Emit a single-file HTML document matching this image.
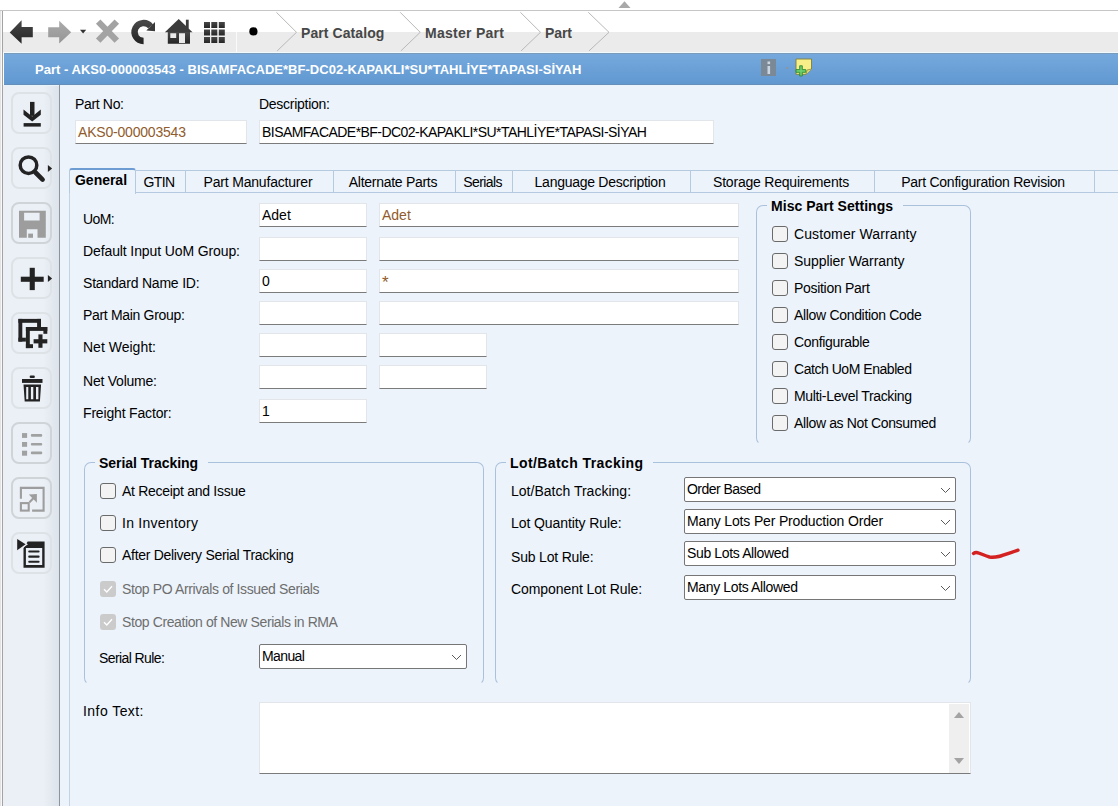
<!DOCTYPE html>
<html><head><meta charset="utf-8">
<style>
*{box-sizing:border-box;margin:0;padding:0}
html,body{width:1118px;height:806px;overflow:hidden;background:#fff;font-family:"Liberation Sans",sans-serif;font-size:13px;color:#000}
.a{position:absolute}
.t{position:absolute;white-space:nowrap;line-height:16px;height:16px;font-size:14px}
.b{font-weight:bold}
.inp{position:absolute;background:#fff;border:1px solid #e2e6eb;border-bottom:1px solid #7b7b7b;height:24px}
.sel{position:absolute;background:#fff;border:1px solid #767676;border-radius:2px;height:25px}
.sel svg{position:absolute;right:4px;top:9px}
.cb{position:absolute;width:16px;height:16px;border:1.3px solid #6a6a6a;border-radius:3px;background:#f3f3f3}
.cbd{position:absolute;width:16px;height:16px;border-radius:3px;background:#cbcbcb}
.grp{position:absolute;border:1px solid #aac1dc;border-bottom-color:transparent;border-radius:7px}
.leg{position:absolute;background:#ecf3fb;padding:0 10px 0 4px}
.tab{position:absolute;top:170px;height:23px;font-size:14px;border:1px solid #b5c9df;border-left:none;text-align:center;line-height:16px;padding-top:3px;padding-right:3px}
.btn{position:absolute;left:11px;width:41px;height:42px;border:2px solid #dde2e7;border-radius:8px}
.btn svg{position:absolute;left:0;top:0}
.brown{color:#915b2c}
.gray{color:#6e6e6e}
</style></head>
<body>
<!-- top strip -->
<div class="a" style="left:0;top:10px;width:1118px;height:1px;background:#c6c6c6"></div>
<svg class="a" style="left:617px;top:0" width="16" height="10"><path d="M1.5 8 L7.5 1.2 L13.5 8 Z" fill="#a9a9a9"/></svg>
<div class="a" style="left:0;top:11px;width:1px;height:795px;background:#e3e3e3"></div><div class="a" style="left:1px;top:11px;width:1px;height:795px;background:#f8f8f8"></div>
<div class="a" style="left:2px;top:11px;width:1px;height:795px;background:#a3a3a3"></div>
<!-- toolbar -->
<div class="a" style="left:3px;top:11px;width:1115px;height:21px;background:#fff"></div>
<div class="a" style="left:3px;top:32px;width:1115px;height:20px;background:#ebebeb"></div>
<div class="a" style="left:3px;top:52px;width:1115px;height:1px;background:#effaff"></div>
<div class="a" style="left:236px;top:32px;width:1px;height:20px;background:#fafafa"></div>


<!-- toolbar icons -->
<svg class="a" style="left:0;top:0" width="280" height="53">
<defs>
<linearGradient id="gd" x1="0" y1="0" x2="0" y2="1"><stop offset="0" stop-color="#474747"/><stop offset="1" stop-color="#262626"/></linearGradient>
<linearGradient id="gl" x1="0" y1="0" x2="0" y2="1"><stop offset="0" stop-color="#ababab"/><stop offset="1" stop-color="#959595"/></linearGradient>
</defs>
<path d="M9.7 32.4 L21.6 20.3 L21.6 27.1 L32.8 27.1 L32.8 37.3 L21.6 37.3 L21.6 43.7 Z" fill="url(#gd)"/>
<path d="M71.2 32.2 L59.2 20.7 L59.2 27.2 L48.2 27.2 L48.2 37.2 L59.2 37.2 L59.2 43.6 Z" fill="url(#gl)"/>
<path d="M80 29.8 L86.2 29.8 L83.1 33.6 Z" fill="#333"/>
<path d="M98.2 21.6 L116.8 40.6 M116.8 21.6 L98.2 40.6" stroke="#a3a3a3" stroke-width="6.3"/>
<path d="M143.6 41 A9 9 0 1 1 150.6 26.4" fill="none" stroke="url(#gd)" stroke-width="6.3"/>
<path d="M146.3 30.6 L155 31.2 L155 21.9 Z" fill="#3a3a3a"/>
<path d="M178.7 19.1 L164.9 32.2 L192.5 32.2 Z" fill="#3b3b3b"/>
<rect x="185.9" y="19.7" width="2.8" height="9" fill="#3b3b3b"/>
<path d="M167.8 32 H190 V43.8 H167.8 Z M170.3 33.2 V37.9 H176.2 V33.2 Z M179 33.2 V42.9 H185 V33.2 Z" fill="url(#gd)" fill-rule="evenodd"/>
<g fill="url(#gd)">
<rect x="204" y="22" width="6" height="6"/><rect x="211.3" y="22" width="6" height="6"/><rect x="218.8" y="22" width="6" height="6"/>
<rect x="204" y="29.5" width="6" height="6"/><rect x="211.3" y="29.5" width="6" height="6"/><rect x="218.8" y="29.5" width="6" height="6"/>
<rect x="204" y="37" width="6" height="6"/><rect x="211.3" y="37" width="6" height="6"/><rect x="218.8" y="37" width="6" height="6"/>
</g>
<circle cx="253.4" cy="31.4" r="4.1" fill="#000"/>
</svg>
<!-- breadcrumbs -->
<svg class="a" style="left:270px;top:11px" width="350" height="42">
<path d="M6.4 1.3 L26.5 21.3 L7.2 39.9 M130.2 1.3 L150.2 21.3 L130.9 39.9 M250.4 1.3 L270.5 21.3 L251.1 39.9 M318.3 1.3 L339 21.3 L319 39.9" fill="none" stroke="#b9b9b9" stroke-width="1"/>
</svg>
<div class="t b" style="left:301px;top:25px;font-size:14px;color:#474747;letter-spacing:0.08px">Part Catalog</div>
<div class="t b" style="left:425px;top:25px;font-size:14px;color:#474747;letter-spacing:0.27px">Master Part</div>
<div class="t b" style="left:545px;top:25px;font-size:14px;color:#474747;letter-spacing:-0.08px">Part</div>

<!-- title bar -->
<div class="a" style="left:4px;top:53px;width:1114px;height:32px;background:linear-gradient(#75a9dd,#6098d0);border-top:1px solid #7b9bbb;border-bottom:1px solid #678eb9"></div>
<div class="t b" style="left:35px;top:62px;color:#fff;font-size:13px;letter-spacing:0.02px">Part - AKS0-000003543 - BISAMFACADE*BF-DC02-KAPAKLI*SU*TAHLİYE*TAPASI-SİYAH</div>


<svg class="a" style="left:755px;top:53px" width="65" height="30">
<rect x="6" y="6" width="15" height="17" fill="#7b8997"/>
<rect x="12.5" y="8.5" width="2.6" height="2.6" fill="#ccd6e0"/>
<rect x="12.5" y="13" width="2.6" height="8" fill="#ccd6e0"/>
<circle cx="32.3" cy="15" r="1" fill="#b08a6a" opacity="0.7"/>
<path d="M41 6 H56.5 V16 L51 21.3 H41 Z" fill="#f8ef88" stroke="#7f7f3a" stroke-width="0.9"/>
<path d="M51 21.3 L52 17 L56.5 16" fill="#e8df70" stroke="#7f7f3a" stroke-width="0.7"/>
<path d="M44.7 12.8 H47.3 V16.6 H50.8 V19.3 H47.3 V23 H44.7 V19.3 H41 V16.6 H44.7 Z" fill="#6dcf6d" stroke="#2f8a2f" stroke-width="0.9"/>
</svg>

<!-- sidebar -->
<div class="a" style="left:3px;top:85px;width:56px;height:721px;background:linear-gradient(90deg,#ebf0f7 0,#ebf0f7 72%,#dde3ea 100%)"></div>
<div class="a" style="left:3px;top:85px;width:56px;height:1px;background:#e4f3fc"></div>
<div class="a" style="left:59px;top:85px;width:1px;height:721px;background:#8e949a"></div>

<!-- sidebar buttons -->
<div class="btn" style="top:92px"></div><svg class="a" style="left:8px;top:90px" width="48" height="48"><g fill="#232323"><rect x="22" y="11.9" width="4.5" height="14"/><path d="M15.5 19.4 L24.2 26.6 L32.8 19.4 L32.8 24.7 L24.2 31.5 L15.5 24.7 Z"/><rect x="15.6" y="33.1" width="17.2" height="3.5"/></g></svg>
<div class="btn" style="top:147px"></div><svg class="a" style="left:8px;top:145px" width="48" height="48"><circle cx="20.5" cy="20.2" r="8.3" fill="none" stroke="#232323" stroke-width="3.5"/><path d="M27.5 27.5 L34.6 34.6" stroke="#232323" stroke-width="4.6" stroke-linecap="round"/><path d="M39.9 20 L44.1 23.5 L39.9 27.1 Z" fill="#232323"/></svg>
<div class="btn" style="top:202px;border-color:#cfd4d9"></div><svg class="a" style="left:8px;top:200px" width="48" height="48"><path d="M11 10.7 H37.8 V37.8 H11 Z M16.1 12.8 V20.5 H31.6 V12.8 Z M18.8 29.2 V37.8 H29.5 V29.2 Z" fill="#9d9d9d" fill-rule="evenodd"/><rect x="20.2" y="33.6" width="4.8" height="4.2" fill="#9d9d9d"/></svg>
<div class="btn" style="top:257px"></div><svg class="a" style="left:8px;top:255px" width="48" height="48"><g fill="#232323"><rect x="21.7" y="12.8" width="5.1" height="22.3"/><rect x="12.8" y="21.7" width="22.9" height="5.1"/></g><path d="M39.9 20 L44.1 23.5 L39.9 27.1 Z" fill="#232323"/></svg>
<div class="btn" style="top:312px"></div><svg class="a" style="left:8px;top:310px" width="48" height="48"><g fill="#232323"><rect x="10.4" y="8.9" width="22.6" height="3.9"/><rect x="10.4" y="8.9" width="3.9" height="22.7"/><rect x="10.4" y="27.7" width="7.5" height="3.9"/><rect x="29.1" y="8.9" width="3.9" height="8.1"/><rect x="17.9" y="17" width="21.4" height="3.9"/><rect x="17.9" y="17" width="3.9" height="21.1"/><rect x="17.9" y="34.2" width="7.1" height="3.9"/><rect x="35.4" y="17" width="3.9" height="6.8"/><rect x="30.4" y="24.4" width="4.1" height="13.4"/><rect x="25.6" y="29.2" width="13.7" height="4.2"/></g></svg>
<div class="btn" style="top:367px"></div><svg class="a" style="left:8px;top:365px" width="48" height="48"><g fill="#232323"><rect x="21.7" y="10.4" width="5.1" height="2.6" rx="1"/><rect x="14" y="14" width="20.5" height="3.9"/><path d="M15.5 19.4 H33.1 L31.9 36.6 H16.7 Z M18.2 22 V34.2 H20.3 V22 Z M22.9 22 V34.2 H25.3 V22 Z M28 22 V34.2 H30.4 V22 Z" fill-rule="evenodd"/></g></svg>
<div class="btn" style="top:422px;border-color:#cfd4d9"></div><svg class="a" style="left:8px;top:420px" width="48" height="48"><g fill="#9d9d9d" opacity="0.95"><rect x="14" y="13.1" width="5.1" height="4.8"/><rect x="14" y="22" width="5.1" height="4.8"/><rect x="14" y="30.7" width="5.1" height="5"/><rect x="22.9" y="14" width="11.3" height="2.7" rx="1"/><rect x="22.9" y="22.9" width="11.3" height="2.7" rx="1"/><rect x="22.9" y="31.6" width="11.3" height="2.6" rx="1"/></g></svg>
<div class="btn" style="top:477px;border-color:#cfd4d9"></div><svg class="a" style="left:8px;top:475px" width="48" height="48"><g fill="none" stroke="#9d9d9d" stroke-width="2.1"><path d="M12.9 23.8 V12.9 H35.6 V35.6 H24.1"/><rect x="12.9" y="28.1" width="7.8" height="7.5"/><path d="M21.5 27.2 L27 21.6"/></g><path d="M20.8 19.4 L28.9 19 L28.9 27.7 Z" fill="#9d9d9d"/></svg>
<div class="btn" style="top:532px"></div><svg class="a" style="left:8px;top:530px" width="48" height="48"><path d="M15.5 17.9 L19.7 11.6 H36.6 V37.8 H15.5 Z M17.9 17.9 V35.1 H34.2 V17.9 Z" fill="#232323" fill-rule="evenodd"/><path d="M9.2 8.9 L17.3 14.3 L9.2 20 Z" fill="#ebeff4" stroke="#ebeff4" stroke-width="3"/><path d="M9.2 8.9 L17.6 14.3 L9.2 20.2 Z" fill="#222"/><g fill="#232323"><rect x="20.2" y="20.5" width="11.4" height="2.1" rx="1"/><rect x="20.2" y="25.6" width="11.4" height="2.1" rx="1"/><rect x="20.2" y="30.7" width="11.4" height="2.1" rx="1"/></g></svg>

<!-- main -->
<div class="a" style="left:60px;top:85px;width:1058px;height:721px;background:#ecf3fb"></div>
<div class="a" style="left:60px;top:85px;width:1058px;height:1px;background:#e6f4fc"></div>


<!-- header fields -->
<div class="t" style="left:75px;top:96px;letter-spacing:-0.34px">Part No:</div>
<div class="t" style="left:259px;top:96px;letter-spacing:-0.27px">Description:</div>
<div class="inp" style="left:75px;top:120px;width:172px"></div>
<div class="t brown" style="left:78px;top:124px;letter-spacing:-0.2px">AKS0-000003543</div>
<div class="inp" style="left:259px;top:120px;width:455px"></div>
<div class="t" style="left:262px;top:124px;letter-spacing:-0.54px">BISAMFACADE*BF-DC02-KAPAKLI*SU*TAHLİYE*TAPASI-SİYAH</div>

<!-- tabs -->
<div class="a" style="left:70px;top:192px;width:1048px;height:1px;background:#b5c9df"></div>
<div class="a" style="left:69px;top:168px;width:67px;height:26px;background:#ecf3fb;border-left:1px solid #b5c9df;border-right:1px solid #b5c9df;border-top:2px solid #6d9cd2;border-radius:3px 3px 0 0"></div>
<div class="t b" style="left:75px;top:172px;letter-spacing:-0.02px">General</div>
<div class="tab" style="left:136px;width:50px;letter-spacing:-0.6px">GTIN</div>
<div class="tab" style="left:186px;width:148px;letter-spacing:-0.19px">Part Manufacturer</div>
<div class="tab" style="left:334px;width:122px;letter-spacing:-0.28px">Alternate Parts</div>
<div class="tab" style="left:456px;width:57px;letter-spacing:-0.6px">Serials</div>
<div class="tab" style="left:513px;width:178px;letter-spacing:-0.27px">Language Description</div>
<div class="tab" style="left:691px;width:184px;letter-spacing:-0.21px">Storage Requirements</div>
<div class="tab" style="left:875px;width:220px;letter-spacing:-0.25px">Part Configuration Revision</div>
<div class="tab" style="left:1095px;width:40px"></div>
<div class="a" style="left:69px;top:193px;width:1px;height:613px;background:#c3d3e5"></div>

<!-- general fields -->
<div class="t" style="left:83px;top:211px;letter-spacing:-0.6px">UoM:</div>
<div class="t" style="left:83px;top:243px;letter-spacing:-0.11px">Default Input UoM Group:</div>
<div class="t" style="left:83px;top:275px;letter-spacing:-0.2px">Standard Name ID:</div>
<div class="t" style="left:83px;top:307px;letter-spacing:-0.32px">Part Main Group:</div>
<div class="t" style="left:83px;top:339px;letter-spacing:0.01px">Net Weight:</div>
<div class="t" style="left:83px;top:373px;letter-spacing:-0.23px">Net Volume:</div>
<div class="t" style="left:83px;top:405px;letter-spacing:-0.17px">Freight Factor:</div>

<div class="inp" style="left:259px;top:203px;width:108px"></div>
<div class="t" style="left:262px;top:207px">Adet</div>
<div class="inp" style="left:379px;top:203px;width:360px"></div>
<div class="t brown" style="left:382px;top:207px">Adet</div>
<div class="inp" style="left:259px;top:237px;width:108px"></div>
<div class="inp" style="left:379px;top:237px;width:360px"></div>
<div class="inp" style="left:259px;top:269px;width:108px"></div>
<div class="t" style="left:262px;top:273px">0</div>
<div class="inp" style="left:379px;top:269px;width:360px"></div>
<div class="t brown" style="left:382px;top:275px;font-size:17px">*</div>
<div class="inp" style="left:259px;top:301px;width:108px"></div>
<div class="inp" style="left:379px;top:301px;width:360px"></div>
<div class="inp" style="left:259px;top:333px;width:108px"></div>
<div class="inp" style="left:379px;top:333px;width:108px"></div>
<div class="inp" style="left:259px;top:365px;width:108px"></div>
<div class="inp" style="left:379px;top:365px;width:108px"></div>
<div class="inp" style="left:259px;top:399px;width:108px"></div>
<div class="t" style="left:262px;top:403px">1</div>

<!-- misc part settings -->
<div class="grp" style="left:756px;top:205px;width:215px;height:240px"></div>
<div class="leg t b" style="left:767px;top:198px;letter-spacing:0.04px">Misc Part Settings</div>
<div class="cb" style="left:772px;top:226px"></div><div class="t" style="left:794px;top:226px;letter-spacing:0.11px">Customer Warranty</div>
<div class="cb" style="left:772px;top:253px"></div><div class="t" style="left:794px;top:253px;letter-spacing:-0.06px">Supplier Warranty</div>
<div class="cb" style="left:772px;top:280px"></div><div class="t" style="left:794px;top:280px;letter-spacing:-0.3px">Position Part</div>
<div class="cb" style="left:772px;top:307px"></div><div class="t" style="left:794px;top:307px;letter-spacing:-0.32px">Allow Condition Code</div>
<div class="cb" style="left:772px;top:334px"></div><div class="t" style="left:794px;top:334px;letter-spacing:-0.33px">Configurable</div>
<div class="cb" style="left:772px;top:361px"></div><div class="t" style="left:794px;top:361px;letter-spacing:-0.46px">Catch UoM Enabled</div>
<div class="cb" style="left:772px;top:388px"></div><div class="t" style="left:794px;top:388px;letter-spacing:-0.34px">Multi-Level Tracking</div>
<div class="cb" style="left:772px;top:415px"></div><div class="t" style="left:794px;top:415px;letter-spacing:-0.36px">Allow as Not Consumed</div>

<!-- serial tracking -->
<div class="grp" style="left:84px;top:462px;width:400px;height:223px"></div>
<div class="leg t b" style="left:95px;top:455px;letter-spacing:-0.04px">Serial Tracking</div>
<div class="cb" style="left:100px;top:483px"></div><div class="t" style="left:122px;top:483px;letter-spacing:-0.29px">At Receipt and Issue</div>
<div class="cb" style="left:100px;top:515px"></div><div class="t" style="left:122px;top:515px;letter-spacing:0.26px">In Inventory</div>
<div class="cb" style="left:100px;top:547px"></div><div class="t" style="left:122px;top:547px;letter-spacing:-0.3px">After Delivery Serial Tracking</div>
<div class="cbd" style="left:100px;top:581px"><svg width="16" height="16"><path d="M4 8.3 L6.8 11 L12 5.3" fill="none" stroke="#fff" stroke-width="1.4"/></svg></div><div class="t gray" style="left:122px;top:581px;letter-spacing:-0.38px">Stop PO Arrivals of Issued Serials</div>
<div class="cbd" style="left:100px;top:614px"><svg width="16" height="16"><path d="M4 8.3 L6.8 11 L12 5.3" fill="none" stroke="#fff" stroke-width="1.4"/></svg></div><div class="t gray" style="left:122px;top:614px;letter-spacing:-0.4px">Stop Creation of New Serials in RMA</div>
<div class="t" style="left:99px;top:650px;letter-spacing:-0.6px">Serial Rule:</div>
<div class="sel" style="left:259px;top:644px;width:208px"><div class="t" style="left:2px;top:3px;letter-spacing:-0.6px">Manual</div><svg width="11" height="7"><path d="M1 1 L5.5 5.5 L10 1" fill="none" stroke="#5a5a5a" stroke-width="1"/></svg></div>

<!-- lot batch -->
<div class="grp" style="left:495px;top:462px;width:476px;height:223px"></div>
<div class="leg t b" style="left:506px;top:455px;letter-spacing:0.41px">Lot/Batch Tracking</div>
<div class="t" style="left:511px;top:483px;letter-spacing:0.01px">Lot/Batch Tracking:</div>
<div class="t" style="left:511px;top:515px;letter-spacing:-0.09px">Lot Quantity Rule:</div>
<div class="t" style="left:511px;top:549px;letter-spacing:-0.19px">Sub Lot Rule:</div>
<div class="t" style="left:511px;top:581px;letter-spacing:-0.07px">Component Lot Rule:</div>
<div class="sel" style="left:684px;top:477px;width:272px"><div class="t" style="left:2px;top:3px;letter-spacing:-0.54px">Order Based</div><svg width="11" height="7"><path d="M1 1 L5.5 5.5 L10 1" fill="none" stroke="#5a5a5a" stroke-width="1"/></svg></div>
<div class="sel" style="left:684px;top:509px;width:272px"><div class="t" style="left:2px;top:3px;letter-spacing:-0.16px">Many Lots Per Production Order</div><svg width="11" height="7"><path d="M1 1 L5.5 5.5 L10 1" fill="none" stroke="#5a5a5a" stroke-width="1"/></svg></div>
<div class="sel" style="left:684px;top:541px;width:272px"><div class="t" style="left:2px;top:3px;letter-spacing:-0.36px">Sub Lots Allowed</div><svg width="11" height="7"><path d="M1 1 L5.5 5.5 L10 1" fill="none" stroke="#5a5a5a" stroke-width="1"/></svg></div>
<div class="sel" style="left:684px;top:575px;width:272px"><div class="t" style="left:2px;top:3px;letter-spacing:-0.36px">Many Lots Allowed</div><svg width="11" height="7"><path d="M1 1 L5.5 5.5 L10 1" fill="none" stroke="#5a5a5a" stroke-width="1"/></svg></div>

<!-- red squiggle -->
<svg class="a" style="left:968px;top:544px" width="56" height="20"><path d="M5.5 9.5 C 9 6.5, 14 11, 21.5 13 C 29 14.5, 37 10.5, 50 6.2" fill="none" stroke="#d42222" stroke-width="3.4" stroke-linecap="round"/></svg>

<!-- info text -->
<div class="t" style="left:83px;top:703px;letter-spacing:0.44px">Info Text:</div>
<div class="inp" style="left:259px;top:702px;width:712px;height:72px"></div>
<div class="a" style="left:949px;top:704px;width:20px;height:69px;background:#efefef"></div>
<svg class="a" style="left:952px;top:709px" width="14" height="60"><path d="M2 9 L7 3 L12 9 Z" fill="#a3a3a3"/><path d="M2 49 L7 55 L12 49 Z" fill="#a3a3a3"/></svg>

</body></html>
